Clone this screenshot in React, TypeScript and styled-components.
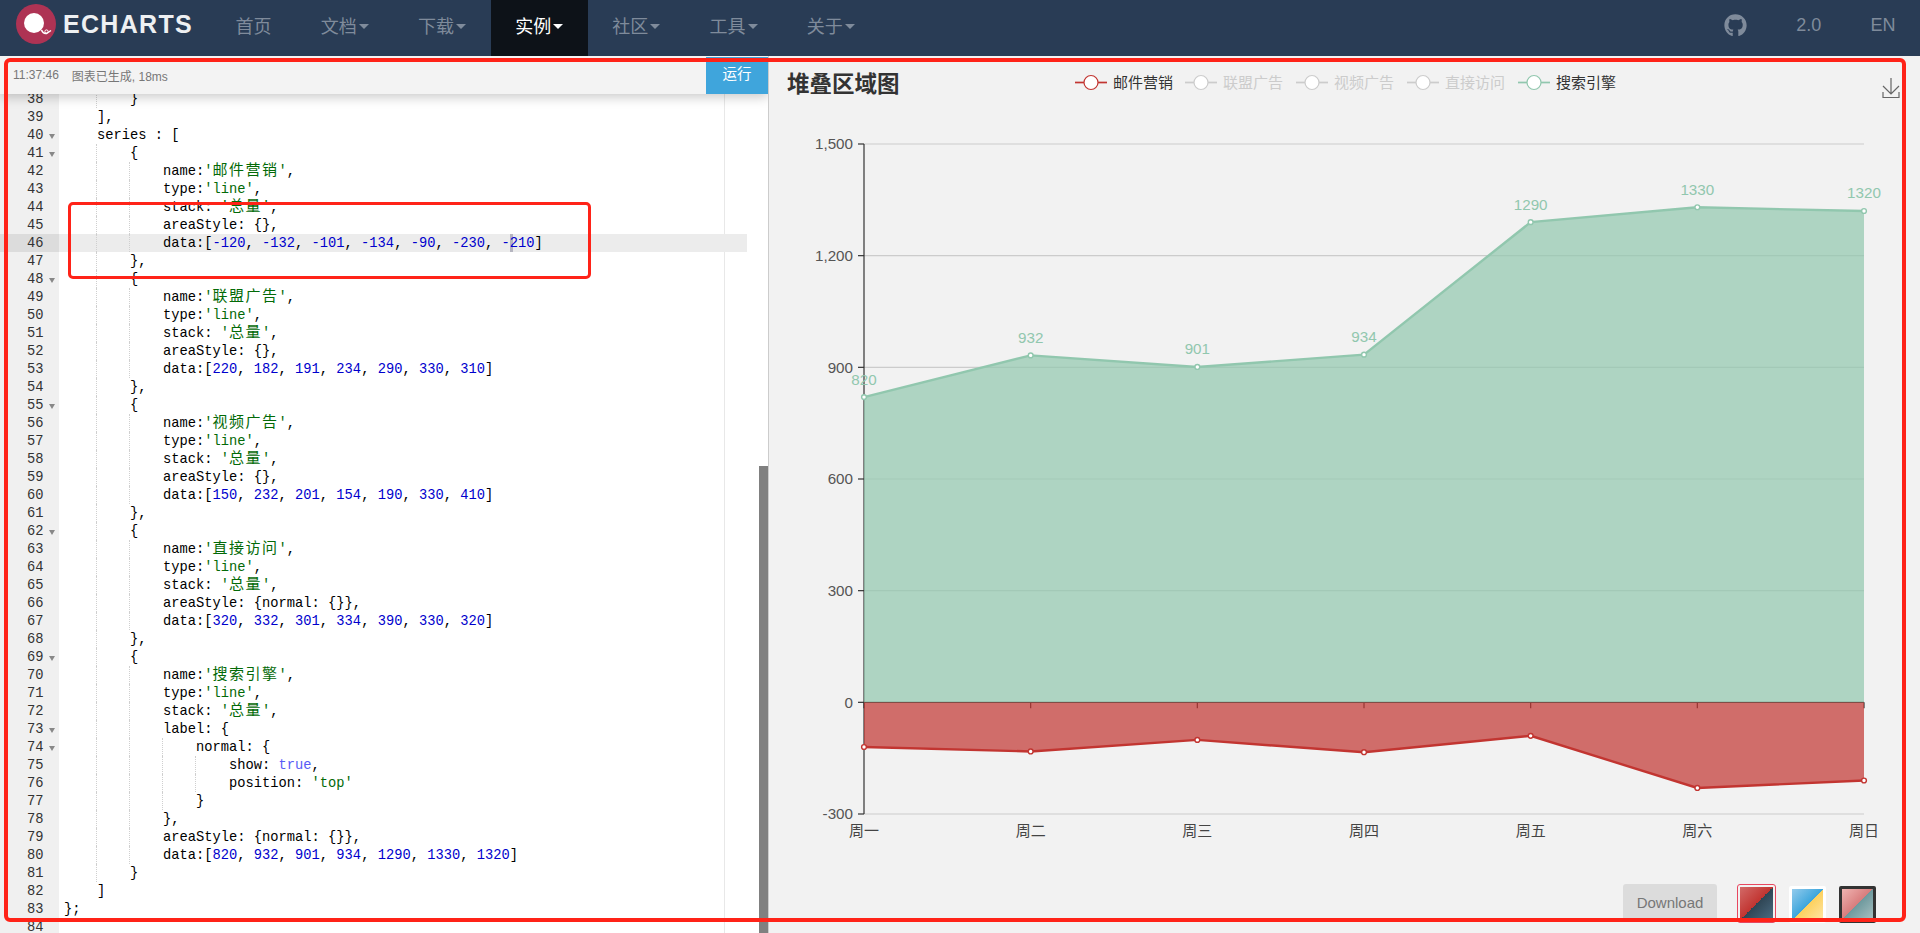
import React from "react";
import styled, { createGlobalStyle } from "styled-components";
import { FaGithub } from "react-icons/fa";

const UI_FONT = `"Liberation Sans", "Noto Sans CJK SC", sans-serif`;

const Global = createGlobalStyle`
  html, body { margin: 0; padding: 0; height: 100%; overflow: hidden; background: #fff; }
  * { box-sizing: border-box; }
`;

const Page = styled.div`
  position: relative;
  width: 1920px;
  height: 933px;
  overflow: hidden;
  font-family: ${UI_FONT};
`;

/* ---------- top navigation ---------- */
const Nav = styled.nav`
  display: flex;
  height: 56px;
  background: #293c55;
`;
const Brand = styled.div`
  display: flex;
  align-items: flex-start;
  gap: 7px;
  width: 211px;
  padding: 4px 0 0 16px;
`;
const BrandText = styled.span`
  font-size: 25px;
  line-height: 40px;
  font-weight: 700;
  letter-spacing: 1.3px;
  color: #eef0f2;
`;
const NavItem = styled.a<{ $active?: boolean }>`
  display: flex;
  align-items: center;
  height: 56px;
  padding: 0 24.6px 6px;
  font-size: 18px;
  color: ${(p) => (p.$active ? "#ffffff" : "#7f8b9b")};
  background: ${(p) => (p.$active ? "#0d1218" : "transparent")};
`;
const Caret = styled.i`
  width: 0;
  height: 0;
  margin: 3px 0 0 2px;
  border-top: 5px solid currentColor;
  border-left: 5px solid transparent;
  border-right: 5px solid transparent;
`;
const NavRight = styled.div`
  display: flex;
  margin-left: auto;
`;
const GithubLink = styled(NavItem)`
  font-size: 23px;
  padding: 0 25px 6px;
`;

/* ---------- main split ---------- */
const Main = styled.main`
  display: flex;
  height: 877px;
`;
const EditorPane = styled.section`
  position: relative;
  display: flex;
  width: 768px;
  height: 877px;
  overflow: hidden;
  background: #fff;
`;
const StatusBar = styled.div`
  position: absolute;
  z-index: 3;
  top: 0;
  left: 0;
  right: 0;
  height: 38px;
  display: flex;
  align-items: center;
  gap: 13px;
  padding-left: 13px;
  font-size: 12px;
  color: #777;
  background: #f3f3f3;
  box-shadow: 0 3px 12px rgba(0, 0, 0, 0.22);
`;
const RunButton = styled.button`
  position: absolute;
  top: 1px;
  right: 0;
  width: 62px;
  height: 37px;
  padding: 0 0 6px;
  border: 0;
  font-family: ${UI_FONT};
  font-size: 14.5px;
  color: #fff;
  background: #3fa5dc;
`;
const Gutter = styled.div`
  flex: none;
  width: 59px;
  padding-top: 34px;
  background: #f0f0f0;
`;
const GutterCell = styled.div<{ $active?: boolean }>`
  display: flex;
  align-items: center;
  height: 18px;
  padding: 2px 0 0 27px;
  font: 13.75px/18px "Liberation Mono", monospace;
  color: #333;
  background: ${(p) => (p.$active ? "#dcdcdc" : "transparent")};
`;
const FoldArrow = styled.i`
  width: 0;
  height: 0;
  margin-left: 5px;
  border-top: 5px solid #888;
  border-left: 3px solid transparent;
  border-right: 3px solid transparent;
`;
const Lines = styled.div`
  position: relative;
  flex: none;
  width: 688px;
  padding-top: 34px;
`;
const PrintMargin = styled.div`
  position: absolute;
  top: 0;
  bottom: 0;
  left: 665px;
  width: 1px;
  background: #e8e8e8;
`;
const CodeLine = styled.div<{ $active?: boolean }>`
  position: relative;
  display: flex;
  height: 18px;
  padding-left: 5px;
  overflow: hidden;
  white-space: pre;
  font: 13.75px/20px "Liberation Mono", "Noto Sans CJK SC", monospace;
  color: #000;
  background: ${(p) => (p.$active ? "#ececec" : "transparent")};
`;
const Indent = styled.span<{ $guide: boolean }>`
  flex: none;
  width: 33px;
  height: 18px;
  border-right: ${(p) => (p.$guide ? "1px dotted #cfcfcf" : "0")};
`;
const Str = styled.span`
  color: #036a07;
`;
const Num = styled.span`
  color: #0000cd;
`;
const Lang = styled.span`
  color: #585cf6;
`;
const Wide = styled.span`
  font-size: 15px;
  letter-spacing: 1.5px;
`;
const CursorMark = styled.i`
  display: inline-block;
  width: 3px;
  height: 18px;
  margin: 0 -3px 0 0;
  vertical-align: top;
  background: #b5b5c0;
`;
const Scrollbar = styled.div`
  position: absolute;
  right: 0;
  top: 410px;
  bottom: 0;
  width: 9px;
  background: #808080;
`;

/* ---------- chart side ---------- */
const ChartPane = styled.section`
  flex: 1;
  display: flex;
  flex-direction: column;
  height: 877px;
  border-left: 1px solid #ccc;
  background: #f2f2f2;
`;
const ChartSvg = styled.svg`
  display: block;
  flex: none;
  width: 1151px;
  height: 828px;
  font-family: ${UI_FONT};
`;
const Toolbar = styled.div`
  display: flex;
  justify-content: flex-end;
  align-items: flex-start;
  padding-right: 44px;
`;
const DownloadButton = styled.button`
  width: 94px;
  height: 37px;
  margin-right: 7px;
  border: 0;
  border-radius: 3px;
  font-family: ${UI_FONT};
  font-size: 15px;
  color: #777;
  background: #dcdcdc;
`;
const Swatch = styled.div<{ $border: string; $a: string; $b: string; $c: string; $d: string; $selected?: boolean }>`
  width: ${(p) => (p.$selected ? 39 : 37)}px;
  height: ${(p) => (p.$selected ? 39 : 37)}px;
  margin-left: 13px;
  margin-top: ${(p) => (p.$selected ? 0 : 2)}px;
  border: ${(p) => p.$border};
  border-radius: ${(p) => (p.$selected ? 3 : 2)}px;
  padding: ${(p) => (p.$selected ? 2 : 0)}px;
  background-clip: content-box;
  background-image: linear-gradient(to bottom right, ${(p) => p.$a} 0%, ${(p) => p.$b} 50%, ${(p) => p.$c} 50%, ${(p) => p.$d} 100%);
`;

/* ---------- hand-drawn annotations lying over the page ---------- */
const OuterMark = styled.div`
  position: absolute;
  z-index: 5;
  left: 4px;
  top: 58px;
  width: 1902px;
  height: 864px;
  border: 4px solid #ff2318;
  border-radius: 6px;
  pointer-events: none;
`;
const InnerMark = styled.div`
  position: absolute;
  z-index: 5;
  left: 68px;
  top: 202px;
  width: 523px;
  height: 77px;
  border: 3.5px solid #ff2318;
  border-radius: 5px;
  pointer-events: none;
`;

/* ---------- data ---------- */
const CODE = `        }
    ],
    series : [
        {
            name:'邮件营销',
            type:'line',
            stack: '总量',
            areaStyle: {},
            data:[-120, -132, -101, -134, -90, -230, -210]
        },
        {
            name:'联盟广告',
            type:'line',
            stack: '总量',
            areaStyle: {},
            data:[220, 182, 191, 234, 290, 330, 310]
        },
        {
            name:'视频广告',
            type:'line',
            stack: '总量',
            areaStyle: {},
            data:[150, 232, 201, 154, 190, 330, 410]
        },
        {
            name:'直接访问',
            type:'line',
            stack: '总量',
            areaStyle: {normal: {}},
            data:[320, 332, 301, 334, 390, 330, 320]
        },
        {
            name:'搜索引擎',
            type:'line',
            stack: '总量',
            label: {
                normal: {
                    show: true,
                    position: 'top'
                }
            },
            areaStyle: {normal: {}},
            data:[820, 932, 901, 934, 1290, 1330, 1320]
        }
    ]
};

`.split("\n");
const FIRST_LINE = 38;
const ACTIVE_LINE = 46;
const FOLDS = [40, 41, 48, 55, 62, 69, 73, 74];

const renderString = (s: string) =>
  s.split(/([\u4e00-\u9fff]+)/).map((part, i) =>
    /[\u4e00-\u9fff]/.test(part) ? <Wide key={i}>{part}</Wide> : part
  );

const renderTokens = (text: string, active: boolean) => {
  const out: React.ReactNode[] = [];
  const re = /('[^']*')|(-?\d+)|(\btrue\b)/g;
  let last = 0;
  let m: RegExpExecArray | null;
  let k = 0;
  while ((m = re.exec(text))) {
    out.push(text.slice(last, m.index));
    if (m[1]) out.push(<Str key={k++}>{renderString(m[1])}</Str>);
    else if (m[2]) {
      if (active && m[2] === "-210")
        out.push(
          <Num key={k++}>
            -<CursorMark />210
          </Num>
        );
      else out.push(<Num key={k++}>{m[2]}</Num>);
    } else out.push(<Lang key={k++}>{m[3]}</Lang>);
    last = m.index + m[0].length;
  }
  out.push(text.slice(last));
  return out;
};

const CodeRow = ({ text, active }: { text: string; active: boolean }) => {
  const spaces = text.length - text.trimStart().length;
  const levels = Math.floor(spaces / 4);
  return (
    <CodeLine $active={active}>
      {Array.from({ length: levels }, (_, i) => (
        <Indent key={i} $guide={i < levels - 1} />
      ))}
      <span>{renderTokens(text.trimStart(), active)}</span>
    </CodeLine>
  );
};

const X0 = 864;
const XW = 1000 / 6;
const Y0 = 702.33;
const UNIT = 670 / 1800;
const xAt = (i: number) => X0 + i * XW;
const yAt = (v: number) => Y0 - v * UNIT;
const RED = "#c23531";
const GREEN = "#91c7ae";
const DAYS = ["周一", "周二", "周三", "周四", "周五", "周六", "周日"];
const TICKS = [1500, 1200, 900, 600, 300, 0, -300];
const NEG = [-120, -132, -101, -134, -90, -230, -210];
const POS = [820, 932, 901, 934, 1290, 1330, 1320];
const LEGEND = [
  { x: 1075, name: "邮件营销", line: RED, text: "#333" },
  { x: 1185, name: "联盟广告", line: "#ccc", text: "#ccc" },
  { x: 1296, name: "视频广告", line: "#ccc", text: "#ccc" },
  { x: 1407, name: "直接访问", line: "#ccc", text: "#ccc" },
  { x: 1518, name: "搜索引擎", line: GREEN, text: "#333" },
];

const pts = (data: number[]) => data.map((v, i) => `${xAt(i)},${yAt(v)}`).join(" ");
const area = (data: number[]) => `${X0},${Y0} ${pts(data)} ${xAt(6)},${Y0}`;

const Series = ({ data, color }: { data: number[]; color: string }) => (
  <g>
    <polygon points={area(data)} fill={color} fillOpacity={0.7} />
    <polyline points={pts(data)} fill="none" stroke={color} strokeWidth={2.4} />
    {data.map((v, i) => (
      <circle key={i} cx={xAt(i)} cy={yAt(v)} r={2.4} fill="#fff" stroke={color} strokeWidth={1.4} />
    ))}
  </g>
);

const Chart = () => (
  <ChartSvg viewBox="769 56 1151 828">
    <text x={787} y={84} fontSize={22.5} fontWeight={700} fill="#333" dominantBaseline="central">
      堆叠区域图
    </text>
    {LEGEND.map((l) => (
      <g key={l.name}>
        <line x1={l.x} x2={l.x + 32} y1={82.5} y2={82.5} stroke={l.line} strokeWidth={1.7} />
        <circle cx={l.x + 16} cy={82.5} r={7} fill="#fff" stroke={l.line} strokeWidth={1.2} />
        <text x={l.x + 38} y={82} fontSize={15} fill={l.text} dominantBaseline="central">
          {l.name}
        </text>
      </g>
    ))}
    <path d="M1891 78V94M1883 86L1891 94L1899 86M1883 92V97.5H1899V92" fill="none" stroke="#666" strokeWidth={1.2} />

    {TICKS.map((t) => (
      <g key={t}>
        <line x1={X0} x2={xAt(6)} y1={yAt(t)} y2={yAt(t)} stroke="#ccc" strokeWidth={1.2} />
        <line x1={X0 - 6} x2={X0} y1={yAt(t)} y2={yAt(t)} stroke="#333" strokeWidth={1.2} />
        <text x={853} y={yAt(t)} fontSize={15.2} fill="#555" textAnchor="end" dominantBaseline="central">
          {t.toLocaleString("en-US")}
        </text>
      </g>
    ))}
    <line x1={X0} x2={X0} y1={144} y2={814} stroke="#333" strokeWidth={1.2} />
    <line x1={X0} x2={xAt(6)} y1={Y0} y2={Y0} stroke="#333" strokeWidth={1.2} />
    {DAYS.map((d, i) => (
      <g key={d}>
        <line x1={xAt(i)} x2={xAt(i)} y1={Y0} y2={Y0 + 6} stroke="#333" strokeWidth={1.2} />
        <text x={xAt(i)} y={830} fontSize={15} fill="#444" textAnchor="middle" dominantBaseline="central">
          {d}
        </text>
      </g>
    ))}
    <Series data={NEG} color={RED} />
    <Series data={POS} color={GREEN} />
    {POS.map((v, i) => (
      <text key={i} x={xAt(i)} y={yAt(v) - 18} fontSize={15.2} fill={GREEN} textAnchor="middle" dominantBaseline="central">
        {v}
      </text>
    ))}
  </ChartSvg>
);

const BrandMark = () => (
  <svg width="40" height="40" viewBox="0 0 40 40">
    <circle cx="20" cy="20" r="20" fill="#ae3354" />
    <circle cx="18" cy="19" r="10" fill="#fff" />
    <path d="M25.5 26 Q27 30 30.5 29.5 L35 26.5" fill="none" stroke="#fff" strokeWidth="1.5" />
    <circle cx="30.5" cy="27.5" r="1.6" fill="none" stroke="#fff" strokeWidth="1" />
  </svg>
);

export default function App() {
  return (
    <Page>
      <Global />
      <Nav>
        <Brand>
          <BrandMark />
          <BrandText>ECHARTS</BrandText>
        </Brand>
        <NavItem>首页</NavItem>
        <NavItem>文档<Caret /></NavItem>
        <NavItem>下载<Caret /></NavItem>
        <NavItem $active>实例<Caret /></NavItem>
        <NavItem>社区<Caret /></NavItem>
        <NavItem>工具<Caret /></NavItem>
        <NavItem>关于<Caret /></NavItem>
        <NavRight>
          <GithubLink><FaGithub /></GithubLink>
          <NavItem>2.0</NavItem>
          <NavItem>EN</NavItem>
        </NavRight>
      </Nav>
      <Main>
        <EditorPane>
          <StatusBar>
            <span>11:37:46</span>
            <span>图表已生成, 18ms</span>
            <RunButton>运行</RunButton>
          </StatusBar>
          <Gutter>
            {CODE.map((_, i) => {
              const n = FIRST_LINE + i;
              return (
                <GutterCell key={n} $active={n === ACTIVE_LINE}>
                  {n}
                  {FOLDS.includes(n) && <FoldArrow />}
                </GutterCell>
              );
            })}
          </Gutter>
          <Lines>
            <PrintMargin />
            {CODE.map((text, i) => (
              <CodeRow key={i} text={text} active={FIRST_LINE + i === ACTIVE_LINE} />
            ))}
          </Lines>
          <Scrollbar />
        </EditorPane>
        <ChartPane>
          <Chart />
          <Toolbar>
            <DownloadButton>Download</DownloadButton>
            <Swatch $selected $border="1px solid #e8475f" $a="#d4706e" $b="#c23531" $c="#2f4554" $d="#4f7188" />
            <Swatch $border="3px solid #fff" $a="#93cbec" $b="#3da6dc" $c="#fcd05c" $d="#ffe6a6" />
            <Swatch $border="3px solid #333" $a="#f0b4b2" $b="#d87c7c" $c="#6f9a9e" $d="#a9c1c2" />
          </Toolbar>
        </ChartPane>
      </Main>
      <OuterMark />
      <InnerMark />
    </Page>
  );
}
